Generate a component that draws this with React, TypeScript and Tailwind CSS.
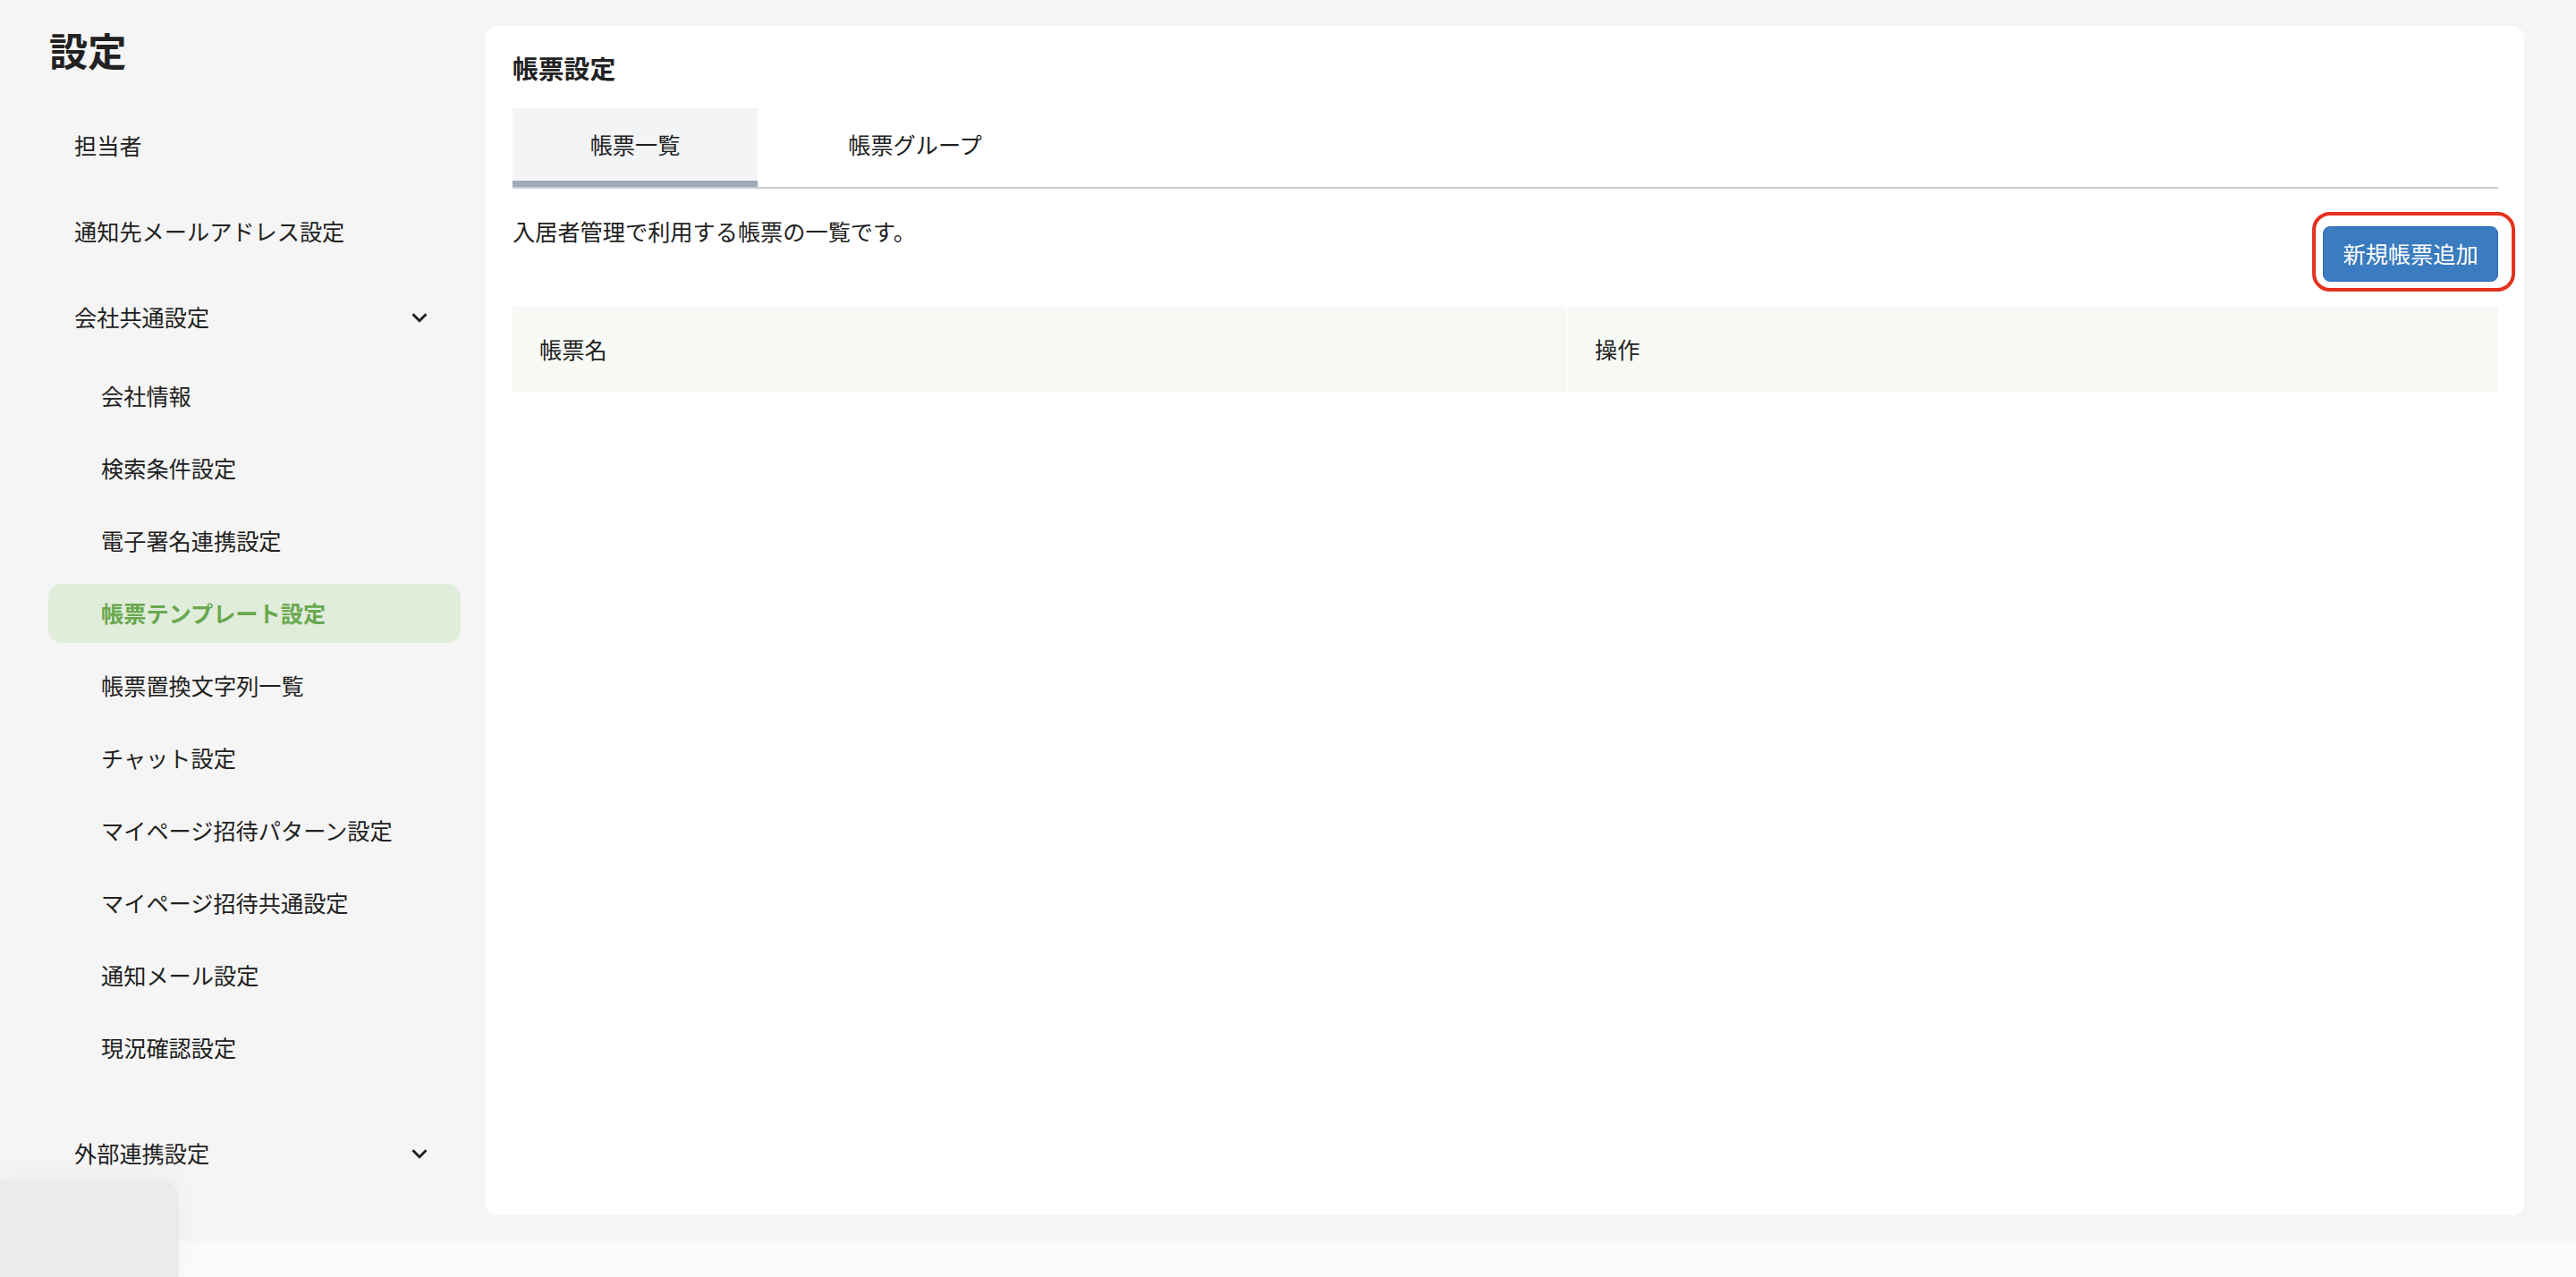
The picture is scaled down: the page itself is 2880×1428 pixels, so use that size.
import React from "react";

const Chevron = () => (
  <svg width="34" height="34" viewBox="0 0 24 24" fill="#1f1f1f" aria-hidden="true">
    <path d="M16.59 8.59 12 13.17 7.41 8.59 6 10l6 6 6-6z" />
  </svg>
);

const subItems = [
  "会社情報",
  "検索条件設定",
  "電子署名連携設定",
  "帳票テンプレート設定",
  "帳票置換文字列一覧",
  "チャット設定",
  "マイページ招待パターン設定",
  "マイページ招待共通設定",
  "通知メール設定",
  "現況確認設定",
];

function TopItem({ label, chevron, className }: { label: string; chevron?: boolean; className?: string }) {
  return (
    <div
      className={
        "h-[66px] rounded-[15px] pl-[29px] pr-[29px] flex items-center justify-between text-[25.2px] leading-none text-[#212121] " +
        (className ?? "")
      }
    >
      <span>{label}</span>
      {chevron ? <Chevron /> : null}
    </div>
  );
}

export default function App() {
  return (
    <div className="relative w-full h-[1428px] overflow-hidden bg-[#f5f5f5] flex flex-col font-['Noto_Sans_CJK_JP','Noto_Sans',sans-serif] text-[#212121]">
      <div className="flex h-[1388px] shrink-0">
        {/* Sidebar */}
        <aside className="w-[543px] shrink-0 pl-[54px] pr-[28px] pt-[33px] flex flex-col">
          <h1 className="h-[44px] leading-[44px] text-[43.2px] font-bold pl-[1px] text-[#222]">設定</h1>
          <TopItem label="担当者" className="mt-[53px]" />
          <TopItem label="通知先メールアドレス設定" className="mt-[30px]" />
          <TopItem label="会社共通設定" chevron className="mt-[30px]" />
          <div className="mt-[22px] flex flex-col gap-[15px]">
            {subItems.map((s) => {
              const active = s === "帳票テンプレート設定";
              return (
                <div
                  key={s}
                  className={
                    active
                      ? "h-[66px] rounded-[15px] pl-[59px] flex items-center text-[25.2px] leading-none bg-[#e1eddb] text-[#69a84f] font-bold"
                      : "h-[66px] rounded-[15px] pl-[59px] flex items-center text-[25.2px] leading-none text-[#212121]"
                  }
                >
                  {s}
                </div>
              );
            })}
          </div>
          <TopItem label="外部連携設定" chevron className="mt-[52px]" />
        </aside>

        {/* Main */}
        <main className="flex-1 pt-[29px] pb-[29px] pr-[58px]">
          <div className="h-full bg-white rounded-[14px] pl-[30px] pr-[29px] pt-[27px]">
            <h2 className="h-[40px] flex items-center text-[28.8px] font-bold text-[#222]">帳票設定</h2>

            <div className="mt-[25px] flex border-b-2 border-[#c9ced6]">
              <div className="w-[274px] h-[88px] bg-[#f3f4f6] border-b-[7px] border-[#9eaab8] flex items-center justify-center text-[25.2px] leading-none">
                帳票一覧
              </div>
              <div className="w-[352px] h-[88px] pb-[7px] flex items-center justify-center text-[25.2px] leading-none">
                帳票グループ
              </div>
            </div>

            <div className="mt-[29px] flex justify-between items-start">
              <p className="leading-[36px] text-[25.2px]">入居者管理で利用する帳票の一覧です。</p>
              <div className="relative mt-[13px]">
                <button className="h-[62px] w-[196px] rounded-[8px] bg-[#3b7bbf] border border-[#2c6cb3] text-white text-[25.2px] leading-none flex items-center justify-center">
                  新規帳票追加
                </button>
                <div className="absolute -left-[12px] -right-[19px] -top-[16px] -bottom-[11px] border-[4px] border-[#e5321f] rounded-[20px] pointer-events-none" />
              </div>
            </div>

            <div className="mt-[28px] flex h-[96px] bg-[#f7f9f5] text-[25.2px] leading-none">
              <div className="w-[1178px] pl-[30px] flex items-center">帳票名</div>
              <div className="flex-1 border-l-2 border-[#fdfdfc] pl-[30px] flex items-center">操作</div>
            </div>
          </div>
        </main>
      </div>

      {/* footer strip */}
      <div className="h-[40px] bg-[#fafafa] shrink-0" />

      {/* floating widget (cut off) */}
      <div className="absolute left-0 bottom-0 w-[200px] h-[108px] bg-[#ebebeb] rounded-tr-[20px] shadow-[0_-8px_30px_rgba(0,0,0,0.035)]" />
    </div>
  );
}
